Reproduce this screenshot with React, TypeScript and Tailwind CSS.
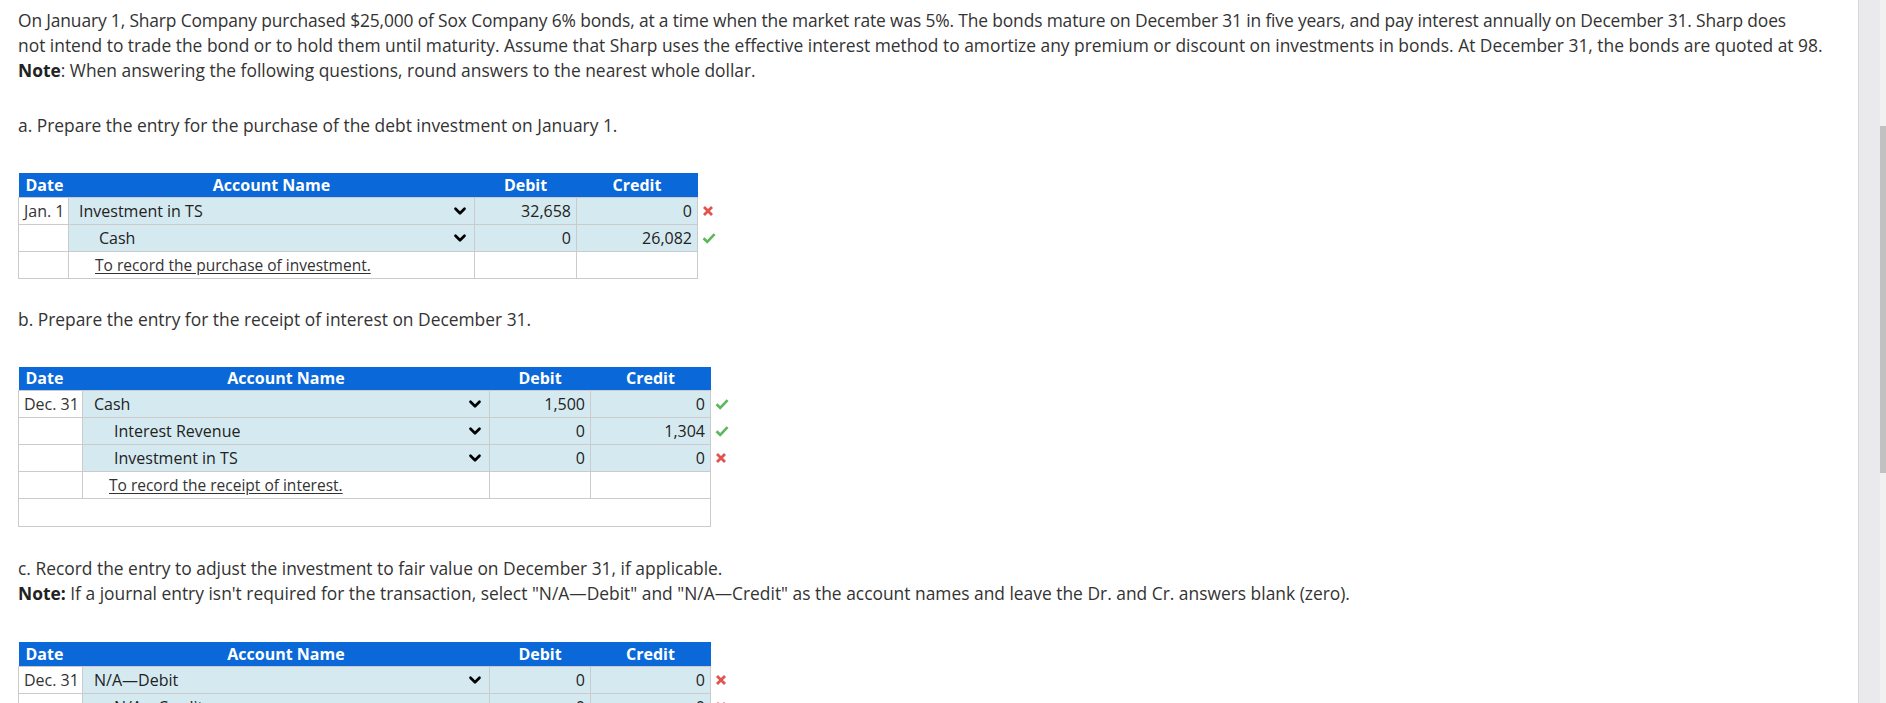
import { ChevronDown } from "lucide-react";

type Entry = {
  date?: string;
  account: string;
  indent?: boolean;
  debit: string;
  credit: string;
  mark: "ok" | "bad";
};

interface JournalProps {
  widths: [string, string, string, string];
  accountPad: string;
  entries: Entry[];
  memo: string;
  blankRow?: boolean;
}

function CheckMark() {
  return (
    <svg width="14" height="12" viewBox="0 0 14 12" className="block">
      <path d="M1.5 6.2 L5.2 9.8 L12.6 2.2" fill="none" stroke="#5cb85c" strokeWidth="2.6" />
    </svg>
  );
}

function CrossMark() {
  return (
    <svg width="12" height="12" viewBox="0 0 12 12" className="block">
      <path d="M2 2 L10 10 M10 2 L2 10" fill="none" stroke="#e0534e" strokeWidth="2.8" />
    </svg>
  );
}

function Journal({ widths, accountPad, entries, memo, blankRow }: JournalProps) {
  return (
    <table className="table-fixed border-collapse text-[16px] leading-[22px] text-[#222]">
      <colgroup>
        <col className={widths[0]} />
        <col className={widths[1]} />
        <col className={widths[2]} />
        <col className={widths[3]} />
        <col className="w-[24px]" />
      </colgroup>
      <thead>
        <tr className="h-[24px] text-white">
          <th className="bg-[#0a68d8] pl-[7px] text-left font-bold">Date</th>
          <th className="bg-[#0a68d8] text-center font-bold">Account Name</th>
          <th className="bg-[#0a68d8] text-center font-bold">Debit</th>
          <th className="bg-[#0a68d8] text-center font-bold">Credit</th>
          <th />
        </tr>
      </thead>
      <tbody>
        {entries.map((e, i) => (
          <tr key={i} className="h-[27px]">
            <td className="border border-[#cbcbcb] bg-white pl-[5px] text-[#333]">{e.date}</td>
            <td className="border border-[#cbcbcb] bg-[#d5eaf0] pr-[5px]">
              <div className="flex items-center justify-between">
                <span className={e.indent ? "pl-[20px]" : ""}>
                  <span className={accountPad} />
                  {e.account}
                </span>
                <ChevronDown size={18} strokeWidth={3.6} className="text-black" />
              </div>
            </td>
            <td className="border border-[#cbcbcb] bg-[#d5eaf0] pr-[5px] text-right">{e.debit}</td>
            <td className="border border-[#cbcbcb] bg-[#d5eaf0] pr-[5px] text-right">{e.credit}</td>
            <td className="pl-[4px]">{e.mark === "ok" ? <CheckMark /> : <CrossMark />}</td>
          </tr>
        ))}
        <tr className="h-[27px]">
          <td className="border border-[#cbcbcb] bg-white" />
          <td className="border border-[#cbcbcb] bg-white pl-[26px]">
            <span className="text-[15.5px] text-[#333] underline underline-offset-2">{memo}</span>
          </td>
          <td className="border border-[#cbcbcb] bg-white" />
          <td className="border border-[#cbcbcb] bg-white" />
          <td />
        </tr>
        {blankRow && (
          <tr className="h-[28px]">
            <td colSpan={4} className="border border-[#cbcbcb] bg-white" />
            <td />
          </tr>
        )}
      </tbody>
    </table>
  );
}

export default function App() {
  return (
    <div className="flex h-[703px] overflow-hidden bg-white font-['Open_Sans',sans-serif]">
      <div className="flex-1 pl-[18px] pt-[8px] text-[17.4px] leading-[25px] text-[#333]">
        <p className="whitespace-nowrap">
          <span className="tracking-[-0.14px]">
            On January 1, Sharp Company purchased $25,000 of Sox Company 6% bonds, at a time when the market rate was
            5%. The bonds mature on December 31 in five years, and pay interest annually on December 31. Sharp does
          </span>
          <br />
          not intend to trade the bond or to hold them until maturity. Assume that Sharp uses the effective interest
          method to amortize any premium or discount on investments in bonds. At December 31, the bonds are quoted at 98.
          <br />
          <b className="text-[#222]">Note</b>: When answering the following questions, round answers to the nearest
          whole dollar.
        </p>

        <p className="mt-[30px]">a. Prepare the entry for the purchase of the debt investment on January 1.</p>

        <div className="mt-[35px]">
          <Journal
            widths={["w-[50px]", "w-[406px]", "w-[102px]", "w-[121px]"]}
            accountPad="pl-[10px]"
            entries={[
              { date: "Jan. 1", account: "Investment in TS", debit: "32,658", credit: "0", mark: "bad" },
              { account: "Cash", indent: true, debit: "0", credit: "26,082", mark: "ok" },
            ]}
            memo="To record the purchase of investment."
          />
        </div>

        <p className="mt-[28px]">b. Prepare the entry for the receipt of interest on December 31.</p>

        <div className="mt-[35px]">
          <Journal
            widths={["w-[64px]", "w-[407px]", "w-[101px]", "w-[120px]"]}
            accountPad="pl-[11px]"
            entries={[
              { date: "Dec. 31", account: "Cash", debit: "1,500", credit: "0", mark: "ok" },
              { account: "Interest Revenue", indent: true, debit: "0", credit: "1,304", mark: "ok" },
              { account: "Investment in TS", indent: true, debit: "0", credit: "0", mark: "bad" },
            ]}
            memo="To record the receipt of interest."
            blankRow
          />
        </div>

        <p className="mt-[29px]">
          c. Record the entry to adjust the investment to fair value on December 31, if applicable.
          <br />
          <b className="text-[#222]">Note:</b> If a journal entry isn't required for the transaction, select
          "N/A—Debit" and "N/A—Credit" as the account names and leave the Dr. and Cr. answers blank (zero).
        </p>

        <div className="mt-[36px]">
          <Journal
            widths={["w-[64px]", "w-[407px]", "w-[101px]", "w-[120px]"]}
            accountPad="pl-[11px]"
            entries={[
              { date: "Dec. 31", account: "N/A—Debit", debit: "0", credit: "0", mark: "bad" },
              { account: "N/A—Credit", indent: true, debit: "0", credit: "0", mark: "bad" },
            ]}
            memo="To record the fair value adjustment."
          />
        </div>
      </div>

      <div className="w-px bg-[#d6d6d6]" />
      <div className="w-[21px] bg-[#eaeaec]" />
      <div className="w-[6px] bg-[#f1f1f1]">
        <div className="mt-[126px] h-[347px] bg-[#c1c1c1]" />
      </div>
    </div>
  );
}
